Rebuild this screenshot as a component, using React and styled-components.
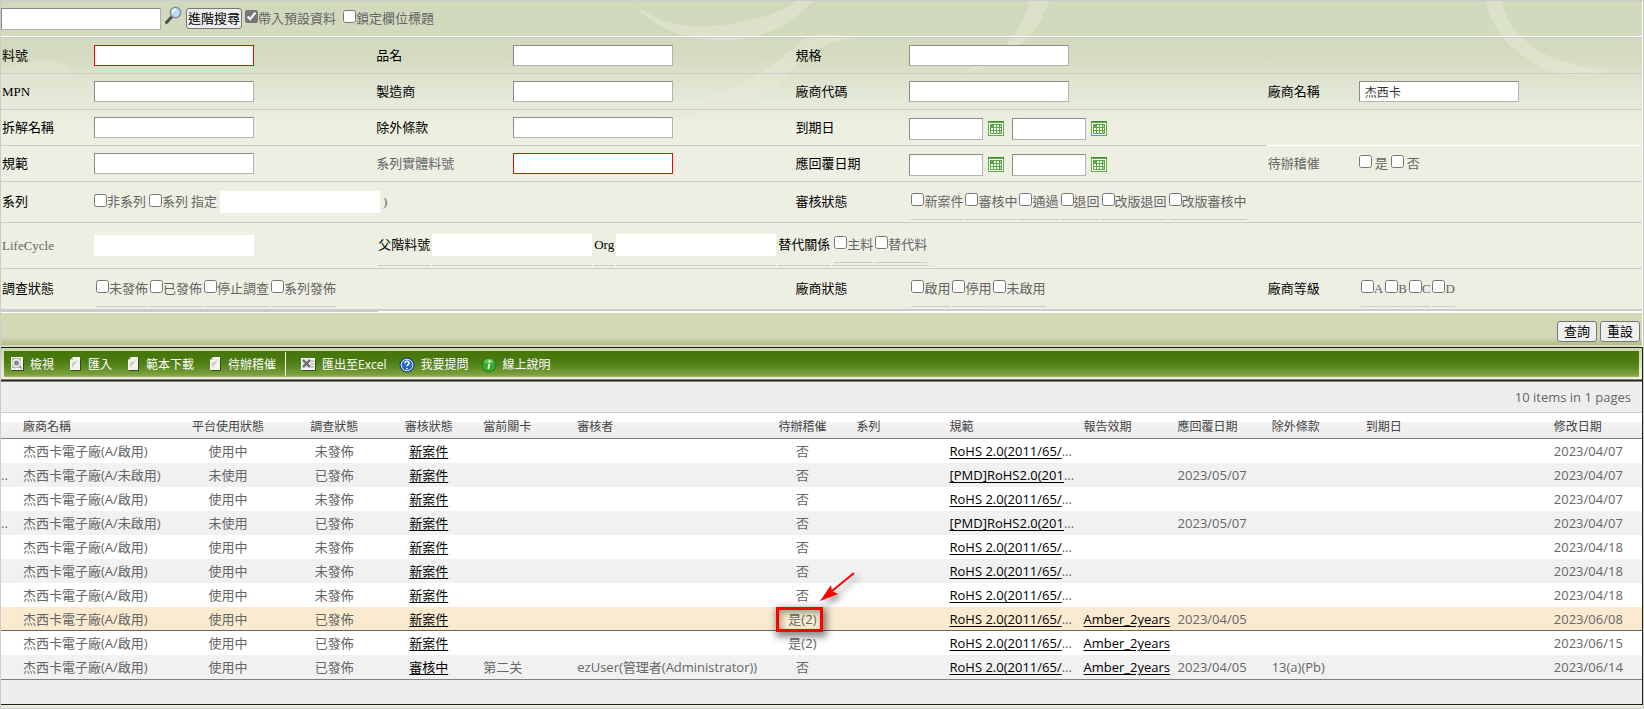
import React from "react";
import styled, { createGlobalStyle, css } from "styled-components";

const GlobalStyle = createGlobalStyle`
  *, *::before, *::after {
    box-sizing: border-box;
  }
  body {
    margin: 0;
    background: #fff;
    color: #666;
    font: 13px/18px "Liberation Serif", "Noto Sans CJK TC", serif;
  }
  button, input {
    font: inherit;
  }
`;

const Page = styled.div`
  border: 1px solid #ccc;
`;

const SearchPanel = styled.div`
  position: relative;
  margin-right: 1px;
  background: linear-gradient(
    #d0d9bc 0,
    #d4dbc0 55px,
    #dbe1c9 72px,
    #e2e8d6 95px,
    #edefe1 125px,
    #eeefe3 200px
  );
`;

const Swirls = styled.svg`
  position: absolute;
  top: 0;
  left: 0;
  pointer-events: none;
`;

const TopBar = styled.div`
  position: relative;
  display: flex;
  align-items: center;
  height: 36px;
  border-bottom: 1px solid #fff;
`;

const TextBox = styled.input`
  flex: none;
  width: ${(p) => (p.$short ? 74 : 160)}px;
  height: ${(p) => (p.$tall ? 22 : 21)}px;
  padding: 1px 5px;
  border: 1px solid;
  border-color: #8b8b8b #b3b3b3 #b3b3b3 #8b8b8b;
  background: #fff;
  color: #333;
  font-size: 12px;
  ${(p) => p.$required && css`border-color: #f00;`}
  ${(p) => p.$plain && css`border-color: #fff;`}
`;

const Button = styled.button`
  height: 21px;
  padding: 0 ${(p) => (p.$tight ? 1 : 6)}px;
  border: 1px solid #767676;
  border-radius: 3px;
  background: #efefef;
  color: #000;
  line-height: 17px;
  white-space: nowrap;
`;

const IconButton = styled.button`
  display: flex;
  flex: none;
  padding: 0;
  border: 0;
  background: none;
`;

const SearchButton = styled(IconButton)`
  margin: 0 4px 6px;
`;

const Check = styled.label`
  display: flex;
  flex: none;
  align-items: center;
  gap: ${(p) => p.$gap || 0}px;
  white-space: nowrap;
  input {
    width: 13px;
    height: 13px;
    margin: 0 0 4px;
    accent-color: #767676;
  }
`;

const TopChecks = styled.div`
  display: flex;
  gap: 7px;
  margin-left: 3px;
`;

const Form = styled.form`
  position: relative;
  border-top: 1px solid #ccc;
`;

const Row = styled.div`
  display: grid;
  grid-template-columns: 92px 282fr 137px 282fr 114px 358fr 91px 284fr;
  height: ${(p) => p.$height || 36}px;
  > * {
    border-bottom: ${(p) => (p.$last ? 2 : 1)}px solid #ccc;
  }
`;

const Cell = styled.div`
  display: flex;
  align-items: center;
  min-width: 0;
  grid-column: span ${(p) => p.$span || 1};
  gap: ${(p) => p.$gap || 0}px;
  padding-left: ${(p) => p.$pad || 1}px;
  color: ${(p) => (p.$muted ? "#666" : "#000")};
  white-space: nowrap;
  ${(p) => p.$white && css`border-bottom-color: #fff;`}
`;

const DateBox = styled.div`
  display: flex;
  align-items: center;
  gap: 5px;
  margin: 2px 8px 0 0;
`;

const Underlined = styled.div`
  display: flex;
  flex: none;
  align-items: center;
  gap: 2px;
  height: ${(p) => p.$height || 35}px;
  padding: 0 ${(p) => p.$pad || 0}px;
  border-bottom: 1px solid #ccc;
  ${(p) => p.$muted && css`color: #666;`}
`;

const Strip = styled.div`
  height: 2px;
  background: linear-gradient(#ccc, #ccc) 0 0 / 23% 1px no-repeat #fff;
`;

const ActionBar = styled.div`
  display: flex;
  justify-content: flex-end;
  gap: 3px;
  height: 34px;
  padding: 8px 2px 0 0;
  background: linear-gradient(#d2dab5 0 24px, #b2bc89 32px, #d5dcbb 32px);
`;

const Grid = styled.div`
  border: solid #20221a;
  border-width: 1px 1px 1px 0;
  font-family: "Open Sans", "Noto Sans CJK TC", sans-serif;
`;

const ToolbarFrame = styled.div`
  height: 32px;
  padding: 3px 3px 2px;
  border-bottom: 1px solid #85857e;
  background: linear-gradient(#ccd5a8, #eef0df);
`;

const Toolbar = styled.div`
  display: flex;
  align-items: center;
  height: 26px;
  padding-left: 4px;
  background: linear-gradient(#467509 0, #4b7b11 10px, #5f8c26 17px, #7da23f 24px, #a6bd70);
`;

const ToolButton = styled.button`
  display: flex;
  align-items: center;
  gap: 6px;
  padding: 1px 0 0;
  margin-right: 12px;
  border: 0;
  background: none;
  color: #fff;
  font-size: 12px;
  white-space: nowrap;
`;

const Separator = styled.span`
  width: 1px;
  height: 24px;
  margin: 0 14px 0 -3px;
  background: #fff;
`;

const Pager = styled.div`
  height: 33px;
  padding: 7px 11px 0 0;
  border-top: 1px solid #20221a;
  border-bottom: 1px solid #ccc;
  background: #eee;
  box-shadow: inset 0 1px #85857e;
  text-align: right;
`;

const Footer = styled.div`
  height: 24px;
  background: #eee;
`;

const PageFoot = styled.div`
  height: 3px;
  background: #e9ebdc;
`;

const Table = styled.table`
  width: 100%;
  table-layout: fixed;
  border-collapse: separate;
  border-spacing: 0;
  border-bottom: 1px solid #808080;

  th, td {
    height: 24px;
    padding: 0 7px;
    text-align: left;
    white-space: nowrap;
  }
  th {
    height: 26px;
    padding-top: 3px;
    border-bottom: 1px solid #808080;
    color: #444;
    font-size: 12px;
    font-weight: normal;
  }
  thead tr {
    background: linear-gradient(#fff 0 9px, #f3f3f3 9px, #ececec 25px);
  }
  th.center, td.center {
    text-align: center;
  }
  td.edge {
    padding: 0;
  }
  td {
    position: relative;
  }
  a {
    color: #000;
    text-underline-offset: 2px;
  }
`;

const DataRow = styled.tr`
  background: #fff;
  &:nth-child(even) {
    background: #f1f1f1;
  }
  &&.active {
    background: #faebd0;
    box-shadow: inset 0 -1px #666;
  }
`;

const Marker = styled.span`
  position: absolute;
  z-index: 1;
  top: 0;
  left: 50%;
  width: 47px;
  height: 25px;
  margin-left: -26px;
  border: 3px solid #f00;
  box-shadow: 2px 3px 7px 2px rgba(0, 0, 0, 0.45), inset 2px 3px 6px rgba(0, 0, 0, 0.35);
`;

const Arrow = styled.svg`
  position: absolute;
  z-index: 2;
  left: calc(50% + 15px);
  top: -40px;
  filter: drop-shadow(4px 4px 3px rgba(0, 0, 0, 0.4));
`;

const Magnifier = () => (
  <svg width="17" height="19" viewBox="0 0 17 19" fill="none">
    <path d="M1.500 16.500l5-5.500" stroke="#4c4f52" strokeWidth="3" strokeLinecap="round" />
    <circle cx="10.500" cy="6.500" r="5.200" fill="#b9dcf5" stroke="#858c92" strokeWidth="1.500" />
    <path d="M7.500 6.500a3 3 0 013-3.200" stroke="#fff" strokeWidth="1.600" />
  </svg>
);

const CalendarIcon = () => (
  <svg width="16" height="15" viewBox="0 0 16 15" shapeRendering="crispEdges">
    <path d="M0 0h16v15H0z" fill="#5fad45" />
    <path d="M1 2h14v12H1z" fill="#fff" />
    <path d="M0 0h16v1H0z" fill="#418a2e" />
    <path d="M2 3h12v10H2z" fill="#5aa646" />
    <path d="M6 4h2v2H6zM9 4h2v2H9zM3 7h2v2H3zM6 7h2v2H6zM9 7h2v2H9zM12 7h1v2h-1zM3 10h2v2H3zM6 10h2v2H6zM9 10h2v2H9z" fill="#fff" />
    <path d="M12 4h1v2h-1zM12 10h1v2h-1z" fill="#b5e0a8" />
  </svg>
);

const ViewIcon = () => (
  <svg width="16" height="16" viewBox="0 0 16 16">
    <path d="M4 3h12v11H4z" fill="#2f5206" />
    <path d="M3 0h12v13H3z" fill="#f4f4ee" />
    <path d="M4 1h9v10H4z" fill="#bbb" />
    <circle cx="8.500" cy="6" r="4" fill="#eee" />
    <circle cx="8.500" cy="6" r="2.500" fill="#888" />
    <path d="M11 9l3 2.500" stroke="#999" strokeWidth="1.500" />
  </svg>
);

const PageIcon = () => (
  <svg width="16" height="16" viewBox="0 0 16 16">
    <path d="M5 13h9V2h1v12H5z" fill="#2f5206" />
    <path d="M7 0h7v13H4V3z" fill="#f3f3ee" />
    <path d="M7 0v3H4zM12 3L6 11V6z" fill="#c9cbc2" />
  </svg>
);

const ExcelIcon = () => (
  <svg width="16" height="16" viewBox="0 0 16 16">
    <path d="M2 3h14v11H2z" fill="#2f5206" />
    <path d="M1 1h14v12H1z" fill="#f5f5f1" />
    <path d="M2 2h9v9H2z" fill="#ddd" />
    <path d="M3 3l7 7M10 3l-7 7" stroke="#666" strokeWidth="2" />
    <path d="M11 4h3M11 7h3M11 10h3" stroke="#999" />
  </svg>
);

const HelpIcon = () => (
  <svg width="16" height="16" viewBox="0 0 16 16" fill="none">
    <circle cx="8" cy="8" r="7" fill="#2767c0" stroke="#123d80" />
    <circle cx="8" cy="8" r="5.800" stroke="#dce9fa" />
    <path d="M6 6.300a2 2 0 114 0c0 1.400-2 1.400-2 3M8 11v1.300" stroke="#fff" strokeWidth="1.600" />
  </svg>
);

const InfoIcon = () => (
  <svg width="16" height="16" viewBox="0 0 16 16" fill="none">
    <circle cx="8" cy="8" r="7" fill="#37aa2c" stroke="#1d7a18" />
    <path d="M3 5a5.500 5.500 0 0110 0c-3 2-7 2-10 0z" fill="#5fc553" />
    <circle cx="8.600" cy="4.400" r="1.200" fill="#fff" />
    <path d="M8.300 7l-.9 5" stroke="#fff" strokeWidth="1.800" />
  </svg>
);

function Checkbox({ children, gap, ...props }) {
  return (
    <Check $gap={gap}>
      <input type="checkbox" {...props} />
      {children}
    </Check>
  );
}

const CheckList = ({ items }) =>
  items.map((item) => (
    <Underlined key={item}>
      <Checkbox>{item}</Checkbox>
    </Underlined>
  ));

function Field({ id, label, muted, ...box }) {
  return (
    <>
      <Cell $muted={muted}>
        <label htmlFor={id}>{label}</label>
      </Cell>
      <Cell>
        <TextBox id={id} {...box} />
      </Cell>
    </>
  );
}

function DateRange({ id, label }) {
  return (
    <>
      <Cell>
        <label htmlFor={id}>{label}</label>
      </Cell>
      <Cell>
        {["from", "to"].map((end) => (
          <DateBox key={end}>
            <TextBox id={end === "from" ? id : id + end} aria-label={label} $short $tall />
            <IconButton type="button" aria-label={label}>
              <CalendarIcon />
            </IconButton>
          </DateBox>
        ))}
      </Cell>
    </>
  );
}

const columns = [
  ["", 15],
  ["廠商名稱", 153],
  ["平台使用狀態", 118, true],
  ["調查狀態", 94, true],
  ["審核狀態", 95, true],
  ["當前關卡", 94],
  ["審核者", 185],
  ["待辦稽催", 94, true],
  ["系列", 93],
  ["規範", 134],
  ["報告效期", 94],
  ["應回覆日期", 94],
  ["除外條款", 94],
  ["到期日", 188],
  ["修改日期", 95],
];

const ROHS = "RoHS 2.0(2011/65/";
const PMD = "[PMD]RoHS2.0(201";

const on = { vendor: "杰西卡電子廠(A/啟用)", platform: "使用中", survey: "未發佈", review: "新案件", todo: "否", spec: ROHS };
const off = { ...on, edge: "..", vendor: "杰西卡電子廠(A/未啟用)", platform: "未使用", survey: "已發佈", spec: PMD, reply: "2023/05/07" };
const sent = { ...on, survey: "已發佈", todo: "是(2)", report: "Amber_2years", reply: "2023/04/05" };

const rows = [
  { ...on, modified: "2023/04/07" },
  { ...off, modified: "2023/04/07" },
  { ...on, modified: "2023/04/07" },
  { ...off, modified: "2023/04/07" },
  { ...on, modified: "2023/04/18" },
  { ...on, modified: "2023/04/18" },
  { ...on, modified: "2023/04/18" },
  { ...sent, modified: "2023/06/08", active: true },
  { ...sent, reply: "", modified: "2023/06/15" },
  {
    ...sent,
    review: "審核中",
    stage: "第二关",
    reviewer: "ezUser(管理者(Administrator))",
    todo: "否",
    except: "13(a)(Pb)",
    modified: "2023/06/14",
  },
];

function App() {
  return (
    <Page>
      <GlobalStyle />
      <SearchPanel>
        <Swirls width="1641" height="130" viewBox="0 0 1641 130" fill="#e8ebd9" fillOpacity=".45">
          <path d="M635 4q35 30 100 18 45-8 60-22h17q-30 34-78 39-70 3-100-35z" />
          <path d="M655 108q85-10 145-68 20-12 52-2-42 4-65 36-40 45-132 40z" />
          <path d="M950 75q65-18 78-75h20q-20 60-95 74z" />
          <path d="M1485 0h16q6 35 50 57 30 12 62 10-20 13-58 5-60-22-70-72z" />
          <path d="M0 70q40-18 65-5 15 20 75 18-50 30-140 18z" fillOpacity=".3" />
        </Swirls>
        <TopBar>
          <TextBox aria-label="搜尋" $tall />
          <SearchButton type="button" aria-label="搜尋">
            <Magnifier />
          </SearchButton>
          <Button type="button" $tight>進階搜尋</Button>
          <TopChecks>
            <Checkbox defaultChecked>帶入預設資料</Checkbox>
            <Checkbox>鎖定欄位標題</Checkbox>
          </TopChecks>
        </TopBar>
        <Form id="filters" onSubmit={(e) => e.preventDefault()}>
          <Row>
            <Field id="partNo" label="料號" $required />
            <Field id="partName" label="品名" />
            <Field id="format" label="規格" />
            <Cell $span={2} />
          </Row>
          <Row>
            <Field id="mpn" label="MPN" />
            <Field id="maker" label="製造商" />
            <Field id="vendorCode" label="廠商代碼" />
            <Field id="vendorName" label="廠商名稱" defaultValue="杰西卡" />
          </Row>
          <Row>
            <Field id="splitName" label="拆解名稱" />
            <Field id="exception" label="除外條款" />
            <DateRange id="expire" label="到期日" />
            <Cell $span={2} $white />
          </Row>
          <Row>
            <Field id="spec" label="規範" />
            <Field id="seriesNo" label="系列實體料號" muted $required />
            <DateRange id="reply" label="應回覆日期" />
            <Cell $muted>待辦稽催</Cell>
            <Cell $muted $gap={3}>
              <Checkbox gap={3}>是</Checkbox>
              <Checkbox gap={3}>否</Checkbox>
            </Cell>
          </Row>
          <Row $height={41}>
            <Cell>系列</Cell>
            <Cell $muted $span={3} $gap={3}>
              <Checkbox>非系列</Checkbox>
              <Checkbox>系列</Checkbox>
              <label htmlFor="assign">指定</label>
              <TextBox id="assign" $tall $plain />
              <span>)</span>
            </Cell>
            <Cell>審核狀態</Cell>
            <Cell $muted $span={3} $gap={2} $pad={3}>
              <CheckList items={["新案件", "審核中", "通過", "退回", "改版退回", "改版審核中"]} />
            </Cell>
          </Row>
          <Row $height={46}>
            <Field id="lifeCycle" label="LifeCycle" muted $plain />
            <Cell $span={6} $gap={2} $pad={3}>
              <Underlined $height={40}>
                <label htmlFor="parentNo">父階料號</label>
              </Underlined>
              <Underlined $height={40}>
                <TextBox id="parentNo" $tall $plain />
              </Underlined>
              <Underlined $height={40}>
                <label htmlFor="org">Org</label>
              </Underlined>
              <Underlined $height={40}>
                <TextBox id="org" $tall $plain />
              </Underlined>
              <Underlined $height={40}>替代關係</Underlined>
              <Underlined $height={40} $pad={2} $muted>
                <CheckList items={["主料", "替代料"]} />
              </Underlined>
            </Cell>
          </Row>
          <Row $height={42} $last>
            <Cell>調查狀態</Cell>
            <Cell $muted $span={3} $gap={2} $pad={3}>
              <CheckList items={["未發佈", "已發佈", "停止調查", "系列發佈"]} />
            </Cell>
            <Cell>廠商狀態</Cell>
            <Cell $muted $gap={2} $pad={3}>
              <CheckList items={["啟用", "停用", "未啟用"]} />
            </Cell>
            <Cell>廠商等級</Cell>
            <Cell $muted $gap={2} $pad={3}>
              <CheckList items={["A", "B", "C", "D"]} />
            </Cell>
          </Row>
        </Form>
        <Strip />
        <ActionBar>
          <Button form="filters">查詢</Button>
          <Button form="filters" type="reset">重設</Button>
        </ActionBar>
      </SearchPanel>
      <Grid>
        <ToolbarFrame>
          <Toolbar>
            <ToolButton><ViewIcon />檢視</ToolButton>
            <ToolButton><PageIcon />匯入</ToolButton>
            <ToolButton><PageIcon />範本下載</ToolButton>
            <ToolButton><PageIcon />待辦稽催</ToolButton>
            <Separator />
            <ToolButton><ExcelIcon />匯出至Excel</ToolButton>
            <ToolButton><HelpIcon />我要提問</ToolButton>
            <ToolButton><InfoIcon />線上說明</ToolButton>
          </Toolbar>
        </ToolbarFrame>
        <Pager>10 items in 1 pages</Pager>
        <Table>
          <colgroup>
            {columns.map(([title, width]) => (
              <col key={title} width={width} />
            ))}
          </colgroup>
          <thead>
            <tr>
              {columns.map(([title, , center]) => (
                <th key={title} className={center ? "center" : ""}>{title}</th>
              ))}
            </tr>
          </thead>
          <tbody>
            {rows.map((row, i) => (
              <DataRow key={i} className={row.active ? "active" : ""}>
                <td className="edge">{row.edge}</td>
                <td>{row.vendor}</td>
                <td className="center">{row.platform}</td>
                <td className="center">{row.survey}</td>
                <td className="center"><a href="#review">{row.review}</a></td>
                <td>{row.stage}</td>
                <td>{row.reviewer}</td>
                <td className="center">
                  {row.todo}
                  {row.active && (
                    <>
                      <Marker />
                      <Arrow width="44" height="40" viewBox="0 0 44 40">
                        <path d="M37 6L15 24" stroke="#f00" strokeWidth="2" />
                        <path d="M3 34l11-16 1 6 6 3z" fill="#f00" />
                      </Arrow>
                    </>
                  )}
                </td>
                <td />
                <td><a href="#spec">{row.spec}</a>...</td>
                <td>{row.report && <a href="#report">{row.report}</a>}</td>
                <td>{row.reply}</td>
                <td>{row.except}</td>
                <td />
                <td>{row.modified}</td>
              </DataRow>
            ))}
          </tbody>
        </Table>
        <Footer />
      </Grid>
      <PageFoot />
    </Page>
  );
}

export default App;
